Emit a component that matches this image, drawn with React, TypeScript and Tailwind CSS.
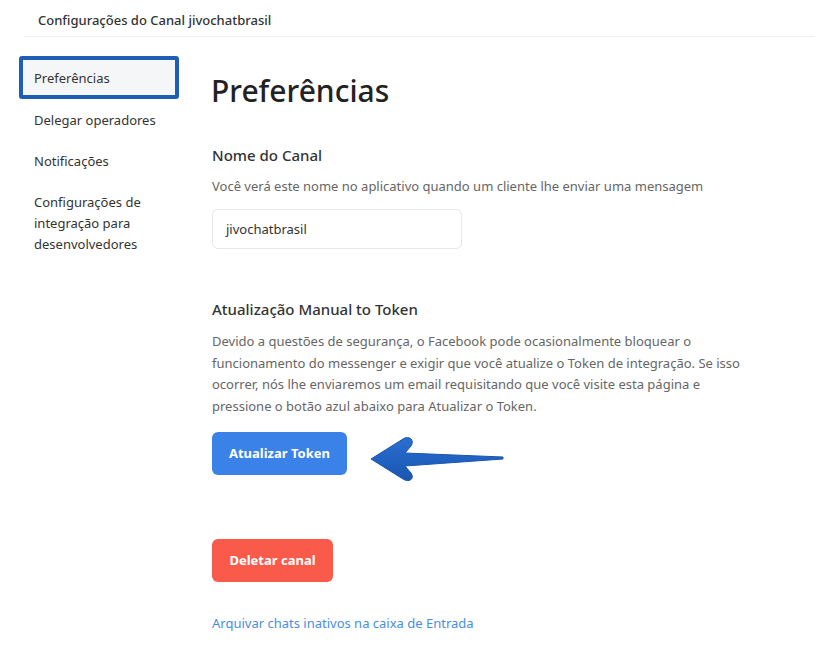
import React from "react";

function Arrow() {
  return (
    <svg width="136" height="50" viewBox="0 0 136 50" className="block">
      <defs>
        <linearGradient id="ag" x1="0" y1="0" x2="0" y2="1">
          <stop offset="0" stopColor="#2a6fd0" />
          <stop offset="1" stopColor="#1a55b0" />
        </linearGradient>
      </defs>
      <path
        d="M2 25 L34 5 C40 1 46 6 42 12 L36 19 L134 23 L134 25 L36 32 L42 39 C46 45 40 49 34 45 Z"
        fill="url(#ag)"
        stroke="#1a55b0"
        strokeWidth="1"
        strokeLinejoin="round"
      />
    </svg>
  );
}

export default function App() {
  const font = { fontFamily: '"Noto Sans", "Open Sans", sans-serif' };
  return (
    <div className="w-[819px] h-[664px] bg-white text-[#333] overflow-hidden" style={font}>
      <div className="pl-[38px] pt-[11px] h-[36px] text-[13px] font-medium text-[#333]">
        Configurações do Canal jivochatbrasil
      </div>
      <div className="ml-[24px] mr-[4px] h-px bg-[#eceef1]" />
      <div className="flex pt-[19px]">
        <div className="w-[192px] pl-[19px] shrink-0">
          <div className="w-[160px] h-[43px] rounded-[3px] border-[4px] border-[#1f5eb5] bg-[#f5f6f8] flex items-center pl-[11px] pt-[2px] text-[13px] text-[#333]">
            Preferências
          </div>
          <div className="pl-[15px] text-[13px] leading-[21px] text-[#333]">
            <div className="mt-[11px]">Delegar operadores</div>
            <div className="mt-[20px]">Notificações</div>
            <div className="mt-[20px] w-[140px]">Configurações de integração para desenvolvedores</div>
          </div>
        </div>
        <div className="flex-1 pl-[20px]">
          <h1 className="text-[30px] leading-[40px] font-medium text-[#222] mt-[15px] -ml-[1px]">Preferências</h1>
          <h2 className="mt-[34px] text-[15px] leading-[20px] font-medium text-[#333]">Nome do Canal</h2>
          <p className="mt-[11px] text-[13px] leading-[20px] text-[#666]">
            Você verá este nome no aplicativo quando um cliente lhe enviar uma mensagem
          </p>
          <div className="mt-[13px] w-[250px] h-[40px] rounded-[6px] border border-[#e6e8eb] flex items-center pl-[13px] pt-[1px] text-[13px] text-[#333]">
            jivochatbrasil
          </div>
          <h2 className="mt-[50px] text-[15px] leading-[20px] font-medium text-[#333]">
            Atualização Manual to Token
          </h2>
          <p className="mt-[12px] w-[550px] text-[13px] leading-[21.7px] text-[#666]">
            Devido a questões de segurança, o Facebook pode ocasionalmente bloquear o funcionamento do messenger e exigir que você atualize o Token de integração. Se isso ocorrer, nós lhe enviaremos um email requisitando que você visite esta página e pressione o botão azul abaixo para Atualizar o Token.
          </p>
          <div className="mt-[6px] flex items-center">
            <button className="w-[135px] h-[43px] rounded-[6px] bg-[#3b82e8] text-white text-[13px] font-bold">
              Atualizar Token
            </button>
            <div className="ml-[22px] mt-[10px]">
              <Arrow />
            </div>
          </div>
          <button className="mt-[55px] w-[121px] h-[43px] rounded-[6px] bg-[#fa5a4a] text-white text-[13px] font-bold">
            Deletar canal
          </button>
          <div className="mt-[31px] text-[13px] leading-[20px] text-[#4a8ee2]">
            Arquivar chats inativos na caixa de Entrada
          </div>
        </div>
      </div>
    </div>
  );
}
